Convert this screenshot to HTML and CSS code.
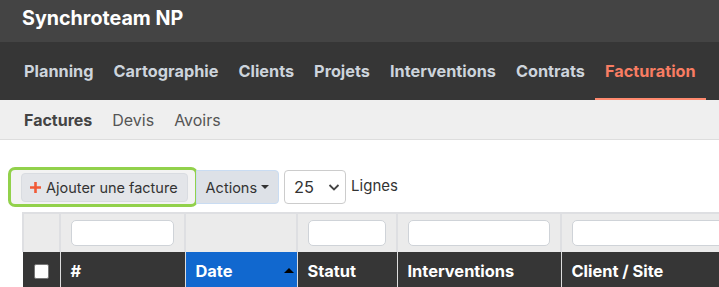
FILE: index.html
```html
<!DOCTYPE html>
<html lang="fr">
<head>
    <meta charset="UTF-8">
    <meta name="viewport" content="width=device-width, initial-scale=1.0">
    <title>Synchroteam NP - Factures</title>
    <link rel="stylesheet" href="styles.css">
</head>
<body>
    <header class="topbar">
        <span class="brand">Synchroteam NP</span>
    </header>

    <nav class="mainnav">
        <a href="#">Planning</a>
        <a href="#">Cartographie</a>
        <a href="#">Clients</a>
        <a href="#">Projets</a>
        <a href="#">Interventions</a>
        <a href="#">Contrats</a>
        <a href="#" class="active">Facturation</a>
    </nav>

    <nav class="subnav">
        <a href="#" class="active">Factures</a>
        <a href="#">Devis</a>
        <a href="#">Avoirs</a>
    </nav>

    <main class="content">
        <div class="toolbar">
            <div class="highlight">
                <button class="btn-add">
                    <svg class="plus" width="11" height="11" viewBox="0 0 11 11"><path d="M5.5 0 V11 M0 5.5 H11" stroke="#f15a37" stroke-width="2.6"/></svg>
                    Ajouter une facture
                </button>
            </div>
            <button class="btn-actions">Actions <span class="caret"></span></button>
            <div class="select-box">
                <span>25</span>
                <svg width="14" height="14" viewBox="0 0 14 14"><path d="M2.5 5 L7 9.5 L11.5 5" fill="none" stroke="#444" stroke-width="1.8"/></svg>
            </div>
            <span class="lines-label">Lignes</span>
        </div>

        <div class="table-wrap">
            <table class="grid">
                <colgroup>
                    <col style="width: 37px">
                    <col style="width: 125px">
                    <col style="width: 112px">
                    <col style="width: 100px">
                    <col style="width: 164px">
                    <col style="width: 159px">
                </colgroup>
                <thead>
                    <tr class="filters">
                        <td></td>
                        <td><input type="text"></td>
                        <td></td>
                        <td><input type="text"></td>
                        <td><input type="text"></td>
                        <td class="last"><input type="text"></td>
                    </tr>
                    <tr class="heads">
                        <th class="check"><span class="checkbox"></span></th>
                        <th>#</th>
                        <th class="sorted">Date <span class="sort-up"></span></th>
                        <th>Statut</th>
                        <th>Interventions</th>
                        <th>Client / Site</th>
                    </tr>
                </thead>
            </table>
        </div>
    </main>
</body>
</html>
```

FILE: styles.css
```css
body {
    margin: 0;
    font-family: Inter, "Noto Sans", Arial, sans-serif;
    background-color: #ffffff;
    color: #333333;
    overflow: hidden;
}
a {
    text-decoration: none;
}
.topbar {
    height: 42px;
    background-color: #444444;
    display: flex;
    align-items: center;
    padding-left: 22px;
}
.brand {
    color: #ffffff;
    font-size: 19.7px;
    font-weight: 700;
    margin-top: -6px;
}
.mainnav {
    height: 58px;
    background-color: #363636;
    display: flex;
    align-items: stretch;
    padding-left: 14px;
    white-space: nowrap;
}
.mainnav a {
    display: flex;
    align-items: center;
    padding: 2px 10px 0 10px;
    color: #cdd4dc;
    font-size: 16.3px;
    font-weight: 700;
    border-bottom: 2px solid transparent;
}
.mainnav a.active {
    color: #f87d63;
    border-bottom-color: #ff8a6f;
}
.subnav {
    height: 39px;
    background-color: #efefef;
    border-bottom: 1px solid #dddddd;
    display: flex;
    align-items: center;
    padding-left: 14px;
}
.subnav a {
    padding: 0 10px;
    color: #555555;
    font-size: 16px;
}
.subnav a.active {
    font-weight: 700;
    color: #444444;
}
.content {
    padding-top: 27px;
}
.toolbar {
    display: flex;
    align-items: center;
    margin-left: 8px;
}
.highlight {
    border: 3px solid #92d14b;
    border-radius: 7px;
    padding: 3px 7px 2px 10px;
    background-color: #f3f3f3;
}
.btn-add {
    height: 29px;
    padding: 0 9px 0 8px;
    border: 1px solid #d9dce1;
    border-radius: 4px;
    background-color: #e3e5e9;
    color: #333333;
    font-family: inherit;
    font-size: 14.5px;
    display: flex;
    align-items: center;
}
.plus {
    margin-right: 5px;
}
.btn-actions {
    height: 34px;
    padding: 0 9px;
    margin-left: -2px;
    border: 1px solid #c9dcf2;
    border-radius: 0 4px 4px 0;
    background-color: #dde1e7;
    color: #333333;
    font-family: inherit;
    font-size: 14.5px;
    display: flex;
    align-items: center;
}
.caret {
    display: inline-block;
    margin-left: 4px;
    border-left: 4px solid transparent;
    border-right: 4px solid transparent;
    border-top: 4px solid #333333;
}
.select-box {
    margin-left: 5px;
    width: 62px;
    height: 34px;
    box-sizing: border-box;
    border: 1px solid #cccccc;
    border-radius: 4px;
    display: flex;
    align-items: center;
    justify-content: space-between;
    padding: 0 4px 0 9px;
    font-size: 16.4px;
    color: #333333;
}
.lines-label {
    margin-left: 5px;
    margin-top: -3px;
    font-size: 15px;
    color: #333333;
}
.table-wrap {
    margin: 5px 0 0 22px;
}
.grid {
    border-collapse: collapse;
    table-layout: fixed;
    width: 697px;
}
.filters td {
    height: 38px;
    background-color: #ebebeb;
    border: 2px solid #dedfe2;
    border-bottom: none;
    padding: 0 10px;
}
.filters td.last {
    border-right: none;
    padding-right: 0;
}
.filters input {
    width: 100%;
    height: 26px;
    box-sizing: border-box;
    border: 1px solid #cfd3d8;
    border-radius: 5px;
    background-color: #ffffff;
    display: block;
}
.filters td.last input {
    width: calc(100% + 20px);
}
.heads th {
    height: 38px;
    background-color: #363636;
    color: #ffffff;
    font-size: 16.4px;
    font-weight: 700;
    text-align: left;
    padding: 0 10px 3px;
    border-left: 1px solid #dddddd;
    position: relative;
    white-space: nowrap;
}
.heads th.check {
    padding-left: 11px;
    border-left: none;
}
.checkbox {
    display: block;
    width: 13px;
    height: 13px;
    background-color: #ffffff;
    border: 1px solid #777777;
    border-radius: 2px;
}
.heads th.sorted {
    background-color: #1168cf;
}
.sort-up {
    position: absolute;
    right: 3px;
    top: 16px;
    border-left: 5px solid transparent;
    border-right: 5px solid transparent;
    border-bottom: 5px solid #000000;
}
```
